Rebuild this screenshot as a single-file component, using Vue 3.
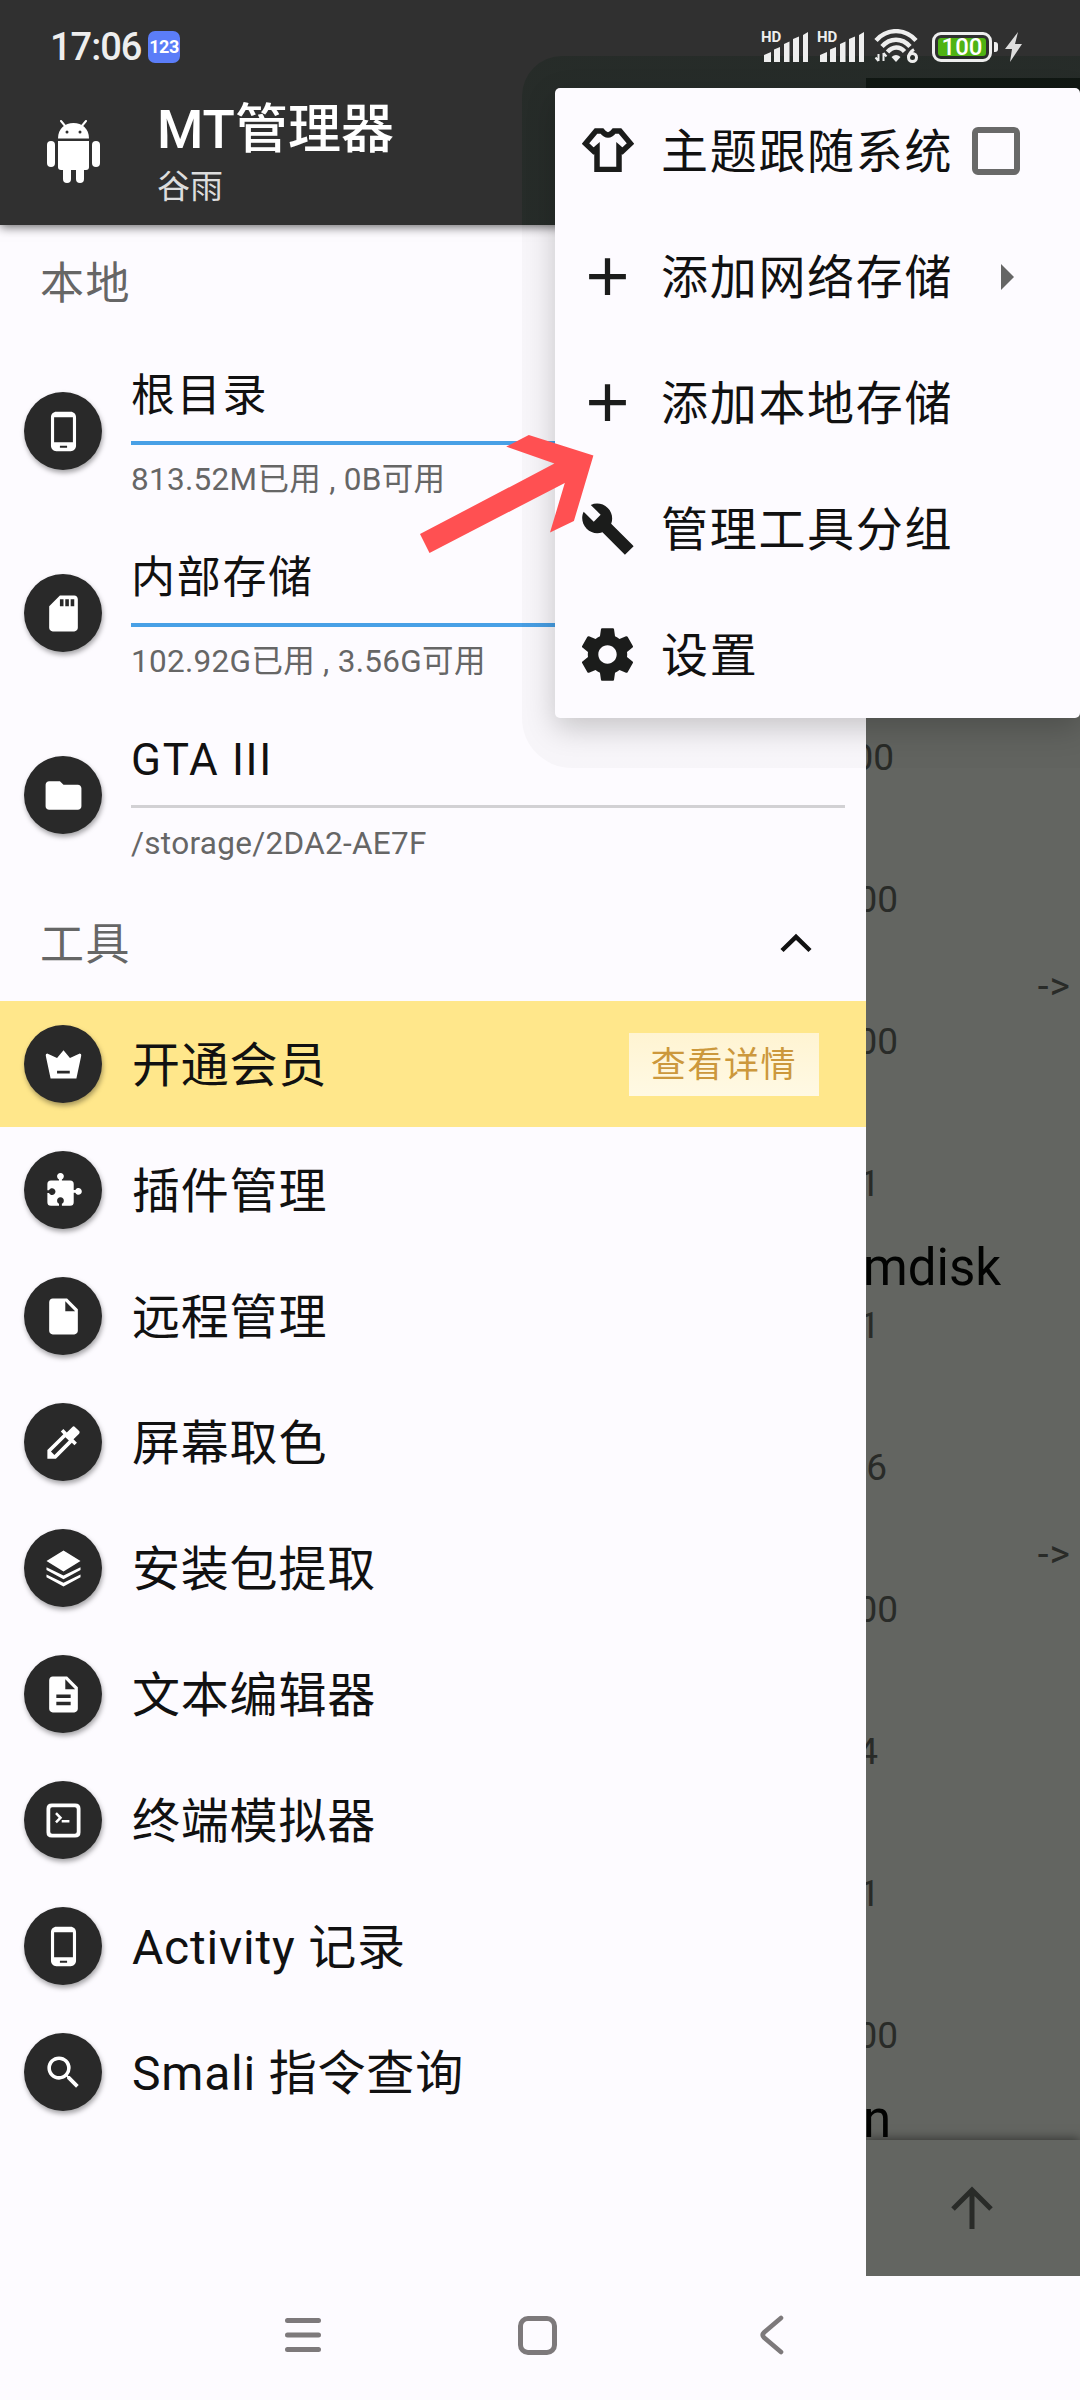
<template>
  <div class="screen">
    <div class="status-bar">
      <span class="clock">17:06</span>
      <span class="notify">123</span>

      <div class="status-icons">
        <div v-for="n in 2" :key="n" class="signal">
          <span class="hd">HD</span>
          <svg width="44" height="30" viewBox="0 0 44 30" fill="#eeeeee">
            <path d="M0 23l7-3v10H0zM10 17.5l6-2.5v15h-6zM20 12l5.5-2.5V30H20zM29 7l6-2.5V30h-6zM39 3l5-3v30h-5z" />
          </svg>
        </div>

        <svg class="wifi" width="46" height="36" viewBox="0 0 46 36" fill="none" stroke="#eeeeee" stroke-width="4.4">
          <path d="M2 11.5C13-1 31-1 42 11.500" />
          <path d="M8 17.500C16 8.500 28 8.500 36 17.500" />
          <path d="M13.500 23C18.500 17 26 17 30.500 22.500" />
          <path d="M17.500 28q4.500-4 9 0l-4.500 5z" fill="#eeeeee" stroke="none" />
          <path d="M4.500 32v-7M4.500 32l-3-3.500M9.500 24v8M9.500 24l3 3.500" stroke-width="2" />
          <circle cx="38.500" cy="28.500" r="4" stroke-width="3" />
          <path d="M40 20.500q-5 3-5.500 8" stroke-width="3" />
        </svg>

        <div class="battery"><span class="level">100</span></div>
        <svg class="bolt" width="17" height="30" viewBox="0 0 17 30" fill="#dddddd">
          <path d="M13 0L0 17h7L5 30 17 12h-7z" />
        </svg>
      </div>
    </div>

    <div class="body">
      <aside class="drawer">
        <header class="drawer-head">
          <svg class="robot" width="53" height="63" viewBox="0 0 53 63" fill="#ffffff">
            <path d="M11 18.500C11 8.500 18 3 26.500 3S42 8.500 42 18.500z" />
            <path d="M14 1l5 6M39 1l-5 6" stroke="#ffffff" stroke-width="2" stroke-linecap="round" />
            <circle cx="20" cy="12" r="1.500" fill="#303030" />
            <circle cx="33" cy="12" r="1.500" fill="#303030" />
            <path d="M11 21h31v26q0 3-3 3H14q-3 0-3-3z" />
            <rect x="0" y="21" width="8" height="26" rx="4" />
            <rect x="45" y="21" width="8" height="26" rx="4" />
            <rect x="16" y="44" width="8" height="19" rx="4" />
            <rect x="29" y="44" width="8" height="19" rx="4" />
          </svg>
          <div>
            <h1 class="title">MT管理器</h1>
            <p class="subtitle">谷雨</p>
          </div>
        </header>

        <div class="section">
          <span class="section-name">本地</span>
        </div>

        <div v-for="s in storages" :key="s.name" class="storage">
          <span class="disc">
            <svg viewBox="0 0 24 24"><path :d="icons[s.icon]" fill-rule="evenodd" /></svg>
          </span>
          <div class="storage-info">
            <div class="storage-name">{{ s.name }}</div>
            <div class="bar" :class="{ used: s.used }"></div>
            <div class="storage-meta">{{ s.meta }}</div>
          </div>
        </div>

        <div class="section">
          <span class="section-name">工具</span>
          <svg width="32" height="20" viewBox="0 0 32 20" fill="none" stroke="#111111" stroke-width="4.500">
            <path d="M2 17.500L16 4l14 13.500" />
          </svg>
        </div>

        <div v-for="t in tools" :key="t.name" class="tool" :class="{ vip: t.action }">
          <span class="disc">
            <svg viewBox="0 0 24 24"><path :d="icons[t.icon]" fill-rule="evenodd" /></svg>
          </span>
          <span class="tool-name">{{ t.name }}</span>
          <button v-if="t.action" class="detail">{{ t.action }}</button>
        </div>
      </aside>

      <section class="files">
        <div class="files-head"></div>
        <div class="file-list">
          <div v-for="(f, i) in files" :key="i" class="file">
            <div class="file-top">
              <span class="file-name">{{ f.name }}</span>
              <span v-if="f.link" class="link">-&gt;</span>
            </div>
            <div class="file-meta" :style="{ width: f.width + 'px' }">{{ f.meta }}</div>
          </div>
        </div>
        <div class="files-bar">
          <svg width="42" height="44" viewBox="0 0 42 44" fill="none" stroke="#292b28" stroke-width="5">
            <path d="M21 43V4M2 23L21 4l19 19" />
          </svg>
        </div>
      </section>
    </div>

    <nav class="nav-bar">
      <svg width="38" height="36" viewBox="0 0 38 36" stroke="#7d797b" stroke-width="5" stroke-linecap="round">
        <path d="M3.500 3.500h31M3.500 18h31M3.500 32.500h31" />
      </svg>
      <span class="home"></span>
      <svg width="25" height="40" viewBox="0 0 25 40" fill="none" stroke="#7d797b" stroke-width="4.600" stroke-linecap="round">
        <path d="M22 3L5 17.500q-2.500 2.500 0 5L22 37" />
      </svg>
    </nav>

    <div class="menu-halo"></div>
    <div class="menu">
      <div v-for="m in menu" :key="m.name" class="menu-item">
        <span class="menu-icon">
          <svg v-if="m.icon === 'shirt'" width="52" height="44" viewBox="0 0 52 44" fill="none" stroke="#1b1c1b" stroke-width="5.500">
            <path d="M14 3h6q6 8 12 0h6l10.500 12.500-8 7.500-3.500-3V41.500H15V20l-3.500 3-8-7.500z" />
          </svg>
          <svg v-else :width="m.size" :height="m.size" viewBox="0 0 24 24" fill="#1b1c1b">
            <path :d="icons[m.icon]" />
          </svg>
        </span>
        <span class="menu-name">{{ m.name }}</span>
        <span v-if="m.check" class="checkbox"></span>
        <span v-if="m.sub" class="caret"></span>
      </div>
    </div>

    <svg class="pointer" width="174" height="120" viewBox="0 0 174 120">
      <path d="M0 99L134.400 28.600 86.200 11.600 108.800 0 173.400 20.600 153.900 86 130 97.600 144.800 48 9.500 118z" fill="#ff5052" />
    </svg>
  </div>
</template>

<script setup>
const icons = {
  phone:
    "M16 1H8C6.340 1 5 2.340 5 4v16c0 1.660 1.340 3 3 3h8c1.660 0 3-1.340 3-3V4c0-1.660-1.340-3-3-3zm-2 20h-4v-1h4v1zm3.250-3H6.750V4h10.500v14z",
  sd: "M18 2h-8L4.020 8 4 20c0 1.100.9 2 2 2h12c1.100 0 2-.9 2-2V4c0-1.100-.9-2-2-2zm-6 6h-2V4h2v4zm3 0h-2V4h2v4zm3 0h-2V4h2v4z",
  folder:
    "M10 4H4c-1.100 0-1.990.9-1.990 2L2 18c0 1.100.9 2 2 2h16c1.100 0 2-.9 2-2V8c0-1.100-.9-2-2-2h-8l-2-2z",
  crown:
    "M2.900 5.800L8.400 8.400 12 4l3.600 4.400 5.500-2.600q1 .3.800 1.300L19.200 19.800H4.800L2.100 7.100q-.2-1 .8-1.300zM8.400 15.500V17h7.100v-1.500z",
  puzzle:
    "M5 6.400h4.500V5.800a1.900 1.900 0 1 1 1.600 0v.6h4.600q2 0 2 2v3.300h.9a1.900 1.900 0 1 1 0 1.600h-.9v5.200q0 2-2 2h-4.600v-1.100a1.900 1.900 0 1 0-1.600 0v1.100H5q-2 0-2-2v-5.100h.9a1.900 1.900 0 1 0 0-1.600H3V8.400q0-2 2-2z",
  file: "M6 2c-1.100 0-1.990.9-1.990 2L4 20c0 1.100.890 2 1.990 2H18c1.100 0 2-.9 2-2V8l-6-6H6zm7 7V3.500L18.500 9H13z",
  picker:
    "M20.710 5.630l-2.340-2.340c-.39-.39-1.020-.39-1.410 0l-3.120 3.120-1.930-1.910-1.410 1.410 1.420 1.420L3 16.250V21h4.750l8.920-8.920 1.420 1.420 1.410-1.410-1.920-1.920 3.120-3.120c.4-.4.4-1.030.010-1.420zM6.920 19L5 17.080l8.060-8.060 1.920 1.920L6.920 19z",
  layers:
    "M12 2l9.500 5.800L12 13.700 2.500 7.800zM2.500 11.300l9.500 4.600 9.500-4.600v1.600L12 18l-9.500-5.100zM2.500 15.300l9.500 4.600 9.500-4.600v1.600L12 22l-9.500-5.100z",
  text: "M14 2H6c-1.100 0-1.990.9-1.990 2L4 20c0 1.100.890 2 1.990 2H18c1.100 0 2-.9 2-2V8l-6-6zm2 16H8v-2h8v2zm0-4H8v-2h8v2zm-3-5V3.500L18.500 9H13z",
  terminal:
    "M5.500 2.500h13q3 0 3 3v13q0 3-3 3h-13q-3 0-3-3v-13q0-3 3-3zM5.700 4.600q-1.100 0-1.100 1.100v12.600q0 1.100 1.100 1.100h12.600q1.100 0 1.100-1.100V5.700q0-1.100-1.100-1.100zM7.300 8.400l1-1 3 3.100-3 3.100-1-1 2-2.100zM11 11.700h4.300v1.400H11z",
  search:
    "M15.500 14h-.790l-.280-.270A6.471 6.471 0 0 0 16 9.500 6.500 6.500 0 1 0 9.500 16c1.610 0 3.090-.590 4.230-1.570l.270.280v.790l5 4.990L20.490 19l-4.990-5zm-6 0C7.010 14 5 11.990 5 9.500S7.010 5 9.500 5 14 7.010 14 9.500 11.990 14 9.500 14z",
  plus: "M19 13h-6v6h-2v-6H5v-2h6V5h2v6h6v2z",
  wrench:
    "M22.700 19l-9.100-9.100c.9-2.300.4-5-1.500-6.900-2-2-5-2.400-7.400-1.300L9 6 6 9 1.600 4.700C.4 7.100.9 10.100 2.900 12.100c1.900 1.900 4.600 2.400 6.900 1.500L19.600 23.400 23.400 19.700z",
  gear: "M19.430 12.980c.04-.32.07-.64.07-.98s-.03-.66-.07-.98l2.110-1.650c.19-.15.24-.42.12-.64l-2-3.460c-.12-.22-.39-.3-.61-.22l-2.490 1c-.52-.4-1.080-.73-1.690-.98l-.38-2.650C14.460 2.180 14.250 2 14 2h-4c-.25 0-.46.18-.49.42l-.38 2.650c-.61.25-1.170.59-1.690.98l-2.490-1c-.23-.09-.49 0-.61.22l-2 3.460c-.13.22-.07.49.12.64l2.110 1.650c-.04.32-.07.65-.07.98s.03.66.07.98l-2.110 1.650c-.19.15-.24.42-.12.64l2 3.460c.12.22.39.3.61.22l2.490-1c.52.4 1.080.73 1.690.98l.38 2.650c.03.24.24.42.49.42h4c.25 0 .46-.18.49-.42l.38-2.650c.61-.25 1.170-.59 1.690-.98l2.490 1c.23.09.49 0 .61-.22l2-3.460c.12-.22.07-.49-.12-.64l-2.110-1.650zM12 15.500c-1.930 0-3.500-1.570-3.500-3.500s1.570-3.500 3.500-3.500 3.500 1.570 3.500 3.500-1.570 3.500-3.500 3.500z",
};

const storages = [
  { name: "根目录", meta: "813.52M已用 , 0B可用", icon: "phone", used: true },
  { name: "内部存储", meta: "102.92G已用 , 3.56G可用", icon: "sd", used: true },
  { name: "GTA III", meta: "/storage/2DA2-AE7F", icon: "folder", used: false },
];

const tools = [
  { name: "开通会员", icon: "crown", action: "查看详情" },
  { name: "插件管理", icon: "puzzle" },
  { name: "远程管理", icon: "file" },
  { name: "屏幕取色", icon: "picker" },
  { name: "安装包提取", icon: "layers" },
  { name: "文本编辑器", icon: "text" },
  { name: "终端模拟器", icon: "terminal" },
  { name: "Activity 记录", icon: "phone" },
  { name: "Smali 指令查询", icon: "search" },
];

const menu = [
  { name: "主题跟随系统", icon: "shirt", check: true },
  { name: "添加网络存储", icon: "plus", size: 63, sub: true },
  { name: "添加本地存储", icon: "plus", size: 63 },
  { name: "管理工具分组", icon: "wrench", size: 55 },
  { name: "设置", icon: "gear", size: 63 },
];

// width is the part of the meta line left visible beside the drawer
const files = [
  { meta: "00", width: 28 },
  { meta: "00", width: 32 },
  { meta: "00", width: 32, link: true },
  { meta: "1", width: 14 },
  { name: "mdisk", meta: "1", width: 14 },
  { meta: "6", width: 21 },
  { meta: "00", width: 32, link: true },
  { meta: "4", width: 12 },
  { meta: "1", width: 14 },
  { meta: "00", width: 32 },
  { name: "n", meta: "", width: 0 },
];
</script>

<style>
body {
  margin: 0;
  background: #fdfbff;
}
</style>

<style scoped>
.screen {
  position: relative;
  display: flex;
  flex-direction: column;
  width: 1080px;
  height: 2400px;
  overflow: hidden;
  background: #fdfbff;
  color: #111;
  font-family: Roboto, "Noto Sans CJK SC", sans-serif;
}
svg {
  display: block;
  flex: none;
}

.status-bar {
  position: relative;
  display: flex;
  align-items: center;
  box-sizing: border-box;
  height: 78px;
  padding: 15px 58px 0 50px;
  background: #303030;
  color: #eee;
}
.clock {
  width: 98px;
  font-size: 38px;
  line-height: 40px;
  font-weight: 500;
  letter-spacing: -1px;
}
.notify {
  width: 32px;
  height: 32px;
  border-radius: 7px;
  background: #5b7df8;
  color: #fff;
  font-size: 18px;
  line-height: 32px;
  font-weight: 700;
  letter-spacing: -0.5px;
  text-align: center;
}
.status-icons {
  display: flex;
  align-items: center;
  margin-left: auto;
}
.signal {
  position: relative;
  margin-right: 12px;
}
.signal + .wifi {
  margin-left: -2px;
}
.hd {
  position: absolute;
  left: -3px;
  top: -2px;
  font-size: 15px;
  line-height: 15px;
  font-weight: 700;
}
.wifi {
  margin-right: 12px;
}
.battery {
  position: relative;
  box-sizing: border-box;
  width: 60px;
  height: 30px;
  padding: 3px;
  border: 3px solid #eee;
  border-radius: 9px;
}
.battery::after {
  content: "";
  position: absolute;
  left: 59px;
  top: 7px;
  width: 4px;
  height: 10px;
  border-radius: 0 3px 3px 0;
  background: #eee;
}
.level {
  display: block;
  height: 18px;
  border-radius: 3px;
  background: #4fb313;
  color: #fff;
  font-size: 24px;
  line-height: 19px;
  font-weight: 500;
  text-align: center;
}
.bolt {
  margin-left: 13px;
}

.body {
  display: flex;
  height: 2198px;
}
.drawer {
  width: 866px;
  overflow: hidden;
  background: #fdfbff;
}
.drawer-head {
  display: flex;
  box-sizing: border-box;
  height: 147px;
  padding-left: 47px;
  background: #303030;
  box-shadow: 0 2px 10px rgba(0, 0, 0, 0.6);
  color: #fff;
}
.robot {
  margin: 42px 57px 0 0;
}
.title {
  margin: 18px 0 0;
  font-size: 53px;
  line-height: 68px;
  font-weight: 500;
}
.subtitle {
  margin: 0;
  color: #ddd;
  font-size: 33px;
  line-height: 46px;
}
.section {
  display: flex;
  align-items: center;
  justify-content: space-between;
  height: 115px;
  padding: 0 54px 0 40px;
}
.section-name {
  padding-bottom: 6px;
  color: #666;
  font-size: 44px;
  letter-spacing: 1.5px;
}
.section svg {
  margin-bottom: 2px;
}
.storage {
  display: flex;
  align-items: center;
  height: 182px;
  padding-left: 24px;
}
.disc {
  display: flex;
  align-items: center;
  justify-content: center;
  flex: none;
  width: 78px;
  height: 78px;
  border-radius: 50%;
  background: #292929;
  box-shadow: 1px 3px 5px rgba(0, 0, 0, 0.35);
}
.disc svg {
  width: 43px;
  height: 43px;
  fill: #fff;
}
.storage-info {
  width: 714px;
  margin-left: 29px;
}
.storage-name {
  padding-top: 2px;
  font-size: 44px;
  line-height: 72px;
  letter-spacing: 1.7px;
}
.bar {
  height: 3px;
  margin: 9px 0 12px;
  background: #d2d1d4;
}
.bar.used {
  height: 4px;
  margin-bottom: 11px;
  background: #48a0e6;
}
.storage-meta {
  color: #666;
  font-size: 31.500px;
  line-height: 48px;
  letter-spacing: 0.3px;
}

.tool {
  display: flex;
  align-items: center;
  height: 126px;
  padding: 0 47px 0 24px;
}
.tool.vip {
  background: #ffe78b;
}
.tool-name {
  margin-left: 30px;
  padding-bottom: 6px;
  font-size: 48px;
  letter-spacing: 0.8px;
}
.detail {
  width: 190px;
  height: 63px;
  margin-left: auto;
  padding: 0 0 5px;
  border: none;
  background: linear-gradient(#fff4d2, #fff9e4);
  color: #cc983c;
  font-family: inherit;
  font-size: 35px;
  letter-spacing: 1.6px;
}

.files {
  display: flex;
  flex-direction: column;
  width: 214px;
  overflow: hidden;
  background: #636561;
  color: #292b28;
}
.files-head {
  flex: none;
  height: 147px;
  background: #111311;
}
.file-list {
  flex: 1;
  min-height: 0;
  padding-top: 432px;
  overflow: hidden;
}
.file {
  height: 142px;
}
.file-top {
  display: flex;
  align-items: center;
  justify-content: space-between;
  height: 86px;
  padding-right: 9px;
}
.file-name {
  margin-left: -3px;
  color: #020302;
  font-size: 51px;
  line-height: 86px;
}
.link {
  padding-top: 3px;
  font-size: 39px;
  letter-spacing: 1px;
}
.file-meta {
  display: flex;
  justify-content: flex-end;
  height: 28px;
  overflow: hidden;
  font-size: 37px;
  line-height: 29px;
}
.files-bar {
  position: relative;
  display: flex;
  align-items: center;
  justify-content: center;
  box-sizing: border-box;
  flex: none;
  height: 136px;
  padding-right: 3px;
  background: #636561;
  box-shadow: 0 -1px 10px rgba(0, 0, 0, 0.5);
}

.nav-bar {
  display: flex;
  align-items: center;
  box-sizing: border-box;
  height: 124px;
  padding: 0 296px 6px 284px;
  justify-content: space-between;
}
.home {
  box-sizing: border-box;
  width: 39px;
  height: 39px;
  margin-right: 6px;
  border: 5px solid #7d797b;
  border-radius: 10px;
}

/* outer edge of the popup elevation, darker over the toolbar */
.menu-halo {
  position: absolute;
  left: 522px;
  top: 56px;
  width: 558px;
  height: 712px;
  border-radius: 40px 0 0 50px;
  background: linear-gradient(rgba(16, 34, 24, 0.3) 169px, rgba(0, 0, 0, 0.025) 169px);
}
.status-icons {
  position: relative;
  z-index: 1;
}
.menu {
  position: absolute;
  left: 555px;
  top: 88px;
  width: 525px;
  height: 630px;
  border-radius: 5px;
  background: #fdfbff;
  box-shadow: 0 10px 30px rgba(0, 0, 0, 0.2);
}
.menu-item {
  display: flex;
  align-items: center;
  height: 126px;
  padding-left: 20px;
}
.menu-icon {
  display: flex;
  justify-content: center;
  width: 65px;
  margin-right: 21px;
}
.menu-icon svg {
  margin-bottom: 2px;
}
.menu-name {
  width: 311px;
  padding-bottom: 7px;
  font-size: 47px;
  letter-spacing: 1.7px;
  white-space: nowrap;
}
.checkbox {
  box-sizing: border-box;
  width: 48px;
  height: 48px;
  border: 6px solid #696969;
  border-radius: 6px;
}
.caret {
  margin-left: 29px;
  border: 13px solid transparent;
  border-left-color: #666;
  border-right-width: 0;
}
.pointer {
  position: absolute;
  left: 420px;
  top: 435px;
}
</style>
